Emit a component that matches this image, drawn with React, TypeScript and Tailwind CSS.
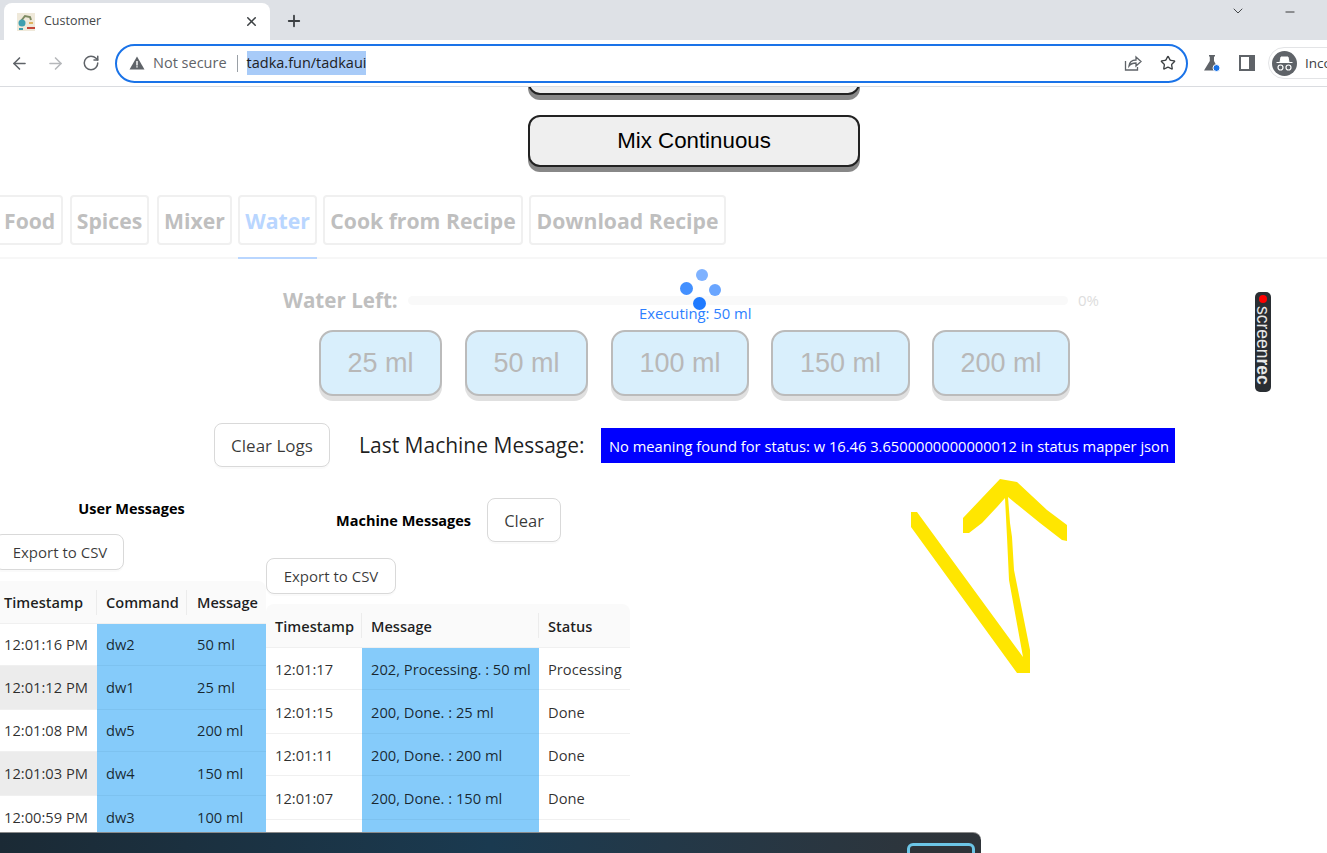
import { ArrowLeft, ArrowRight, ChevronDown, Minus, Plus, RotateCw, Star, X } from 'lucide-react';

const uiFont = "font-['Open_Sans','Noto_Sans',sans-serif]";

const tabs = [
  { label: 'Food', box: 'w-[67px] pl-[6px] text-[#bfbfbf]' },
  { label: 'Spices', box: 'w-[79px] ml-[1px] justify-center text-[#bfbfbf]' },
  { label: 'Mixer', box: 'w-[75px] ml-[2px] justify-center text-[#bfbfbf]' },
  { label: 'Water', box: 'w-[79px] justify-center text-[#b9d6ff]' },
  { label: 'Cook from Recipe', box: 'w-[200px] justify-center text-[#bfbfbf]' },
  { label: 'Download Recipe', box: 'w-[197px] justify-center text-[#bfbfbf]' },
];

const amounts = [
  { label: '25 ml', box: 'w-[123px]' },
  { label: '50 ml', box: 'w-[123px] ml-[1px]' },
  { label: '100 ml', box: 'w-[138px] ml-[1px]' },
  { label: '150 ml', box: 'w-[139px]' },
  { label: '200 ml', box: 'w-[138px]' },
];

const userRows = [
  { time: '12:01:16 PM', command: 'dw2', message: '50 ml', row: 'h-[42px]', stripe: 'bg-white' },
  { time: '12:01:12 PM', command: 'dw1', message: '25 ml', row: 'h-[44px]', stripe: 'bg-[#ececec]' },
  { time: '12:01:08 PM', command: 'dw5', message: '200 ml', row: 'h-[42px]', stripe: 'bg-white' },
  { time: '12:01:03 PM', command: 'dw4', message: '150 ml', row: 'h-[44px]', stripe: 'bg-[#ececec]' },
  { time: '12:00:59 PM', command: 'dw3', message: '100 ml', row: 'h-[44px]', stripe: 'bg-white' },
];

const machineRows = [
  { time: '12:01:17', message: '202, Processing. : 50 ml', status: 'Processing', row: 'h-[42px]' },
  { time: '12:01:15', message: '200, Done. : 25 ml', status: 'Done', row: 'h-[44px]' },
  { time: '12:01:11', message: '200, Done. : 200 ml', status: 'Done', row: 'h-[42px]' },
  { time: '12:01:07', message: '200, Done. : 150 ml', status: 'Done', row: 'h-[44px]' },
  { time: '', message: '', status: '', row: 'h-[44px]' },
];

function Favicon() {
  return (
    <svg className="shrink-0" width="18" height="18" viewBox="0 0 18 18">
      <rect width="18" height="18" fill="#efe9da" />
      <path d="M4 13V8l4-5 5 1 1 3" fill="none" stroke="#7d8a62" strokeWidth="2" />
      <circle cx="5" cy="10" r="3.500" fill="#3f9fb0" />
      <path d="M2 16h4" stroke="#3f9fb0" strokeWidth="2" />
      <path d="M10 15h8" stroke="#c4473a" strokeWidth="2" />
      <path d="M12 10h4" stroke="#d8a23a" strokeWidth="1.500" />
    </svg>
  );
}

function BrowserChrome() {
  return (
    <div className={`${uiFont} shrink-0`}>
      <div className="h-[40px] bg-[#dee1e6] flex items-end pl-[4px] relative">
        <div className="w-[266px] h-[37px] bg-white rounded-t-[8px] flex items-center pl-[13px] pr-[11px]">
          <Favicon />
          <span className="ml-[9px] text-[12.5px] text-[#45474a]">Customer</span>
          <X className="ml-auto w-[15px] h-[15px] text-[#3c4043]" strokeWidth={2.4} />
        </div>
        <Plus className="ml-[15px] mb-[10px] w-[18px] h-[18px] text-[#3c4043]" strokeWidth={2.4} />
        <ChevronDown className="ml-auto mb-[21px] mr-[37px] w-[16px] h-[16px] text-[#45474a]" strokeWidth={1.5} />
        <Minus className="mb-[21px] mr-[30px] w-[14px] h-[14px] text-[#222]" strokeWidth={1.5} />
      </div>
      <div className="h-[47px] bg-white border-b border-[#dadce0] flex items-center pl-[10px] overflow-hidden">
        <ArrowLeft className="shrink-0 w-[19px] h-[19px] text-[#5f6368]" strokeWidth={2} />
        <ArrowRight className="shrink-0 ml-[17px] w-[19px] h-[19px] text-[#b6b8bb]" strokeWidth={2} />
        <RotateCw className="shrink-0 ml-[17px] w-[18px] h-[18px] text-[#5f6368]" strokeWidth={2} />
        <div className="ml-[15px] w-[1073px] h-[39px] border-2 border-[#1a73e8] rounded-full flex items-center pl-[12px] pr-[10px] shrink-0">
          <svg className="shrink-0" width="16" height="14" viewBox="0 0 16 14">
            <path d="M8 0.500 15.500 13.500H.5Z" fill="#5f6368" />
            <path d="M7.300 5h1.400v4.400H7.300zM7.300 10.200h1.400v1.400H7.300z" fill="#fff" />
          </svg>
          <span className="ml-[8px] text-[14.5px] text-[#5f6368]">Not secure</span>
          <span className="ml-[10px] w-px h-[17px] bg-[#9aa0a6]" />
          <span className="ml-[9px] text-[14.5px] leading-[24px] text-[#202124] bg-[#a8cbf8]">tadka.fun/tadkaui</span>
          <svg className="ml-auto" width="18" height="18" viewBox="0 0 18 18" fill="none" stroke="#5f6368" strokeWidth="1.300">
            <path d="M1.500 7v9h12v-3" />
            <path d="M5 12c.5-4 3.500-6 7-6V3l5 4.500-5 4.500V9c-3 0-5.500 1-7 3Z" />
          </svg>
          <Star className="ml-[18px] w-[16px] h-[16px] text-[#3c4043]" strokeWidth={2} />
        </div>
        <svg className="ml-[15px] shrink-0" width="18" height="18" viewBox="0 0 18 18">
          <path d="M6 1h6v1.500h-1V7l5 9.500H1L6.800 7V2.500H6Z" fill="#5f6368" />
          <circle cx="13.500" cy="14" r="3.500" fill="#1a73e8" stroke="#fff" />
        </svg>
        <svg className="ml-[17px] shrink-0" width="18" height="16" viewBox="0 0 18 16">
          <path fillRule="evenodd" d="M1 0h16v16H1ZM3 2v12h8V2Z" fill="#5f6368" />
        </svg>
        <div className="ml-[12px] h-[32px] pl-[3px] w-[80px] shrink-0 border border-[#e3e4e6] rounded-l-full flex items-center">
          <svg className="shrink-0" width="25" height="25" viewBox="0 0 25 25">
            <circle cx="12.500" cy="12.500" r="12.500" fill="#5f6368" />
            <path d="M4.500 11.500h16M8 11l1-5h7l1 5Z" fill="#fff" stroke="#fff" />
            <circle cx="8.500" cy="16.500" r="2.500" fill="none" stroke="#fff" strokeWidth="1.200" />
            <circle cx="16.500" cy="16.500" r="2.500" fill="none" stroke="#fff" strokeWidth="1.200" />
          </svg>
          <span className="ml-[8px] text-[13.5px] text-[#3c4043]">Incognito</span>
        </div>
      </div>
    </div>
  );
}

function OutlineButton({ label, className }: { label: string; className: string }) {
  return (
    <button className={`${className} bg-white border border-[#d9d9d9] rounded-[8px] shadow-[0_2px_0_rgba(0,0,0,0.02)] text-[rgba(0,0,0,0.78)] shrink-0`}>
      {label}
    </button>
  );
}

function HeaderCell({ label, pad, last }: { label: string; pad: string; last?: boolean }) {
  return (
    <div className="flex items-center h-full">
      <span className={`${pad} pt-[2px] font-semibold text-[14.6px] text-[rgba(0,0,0,0.88)]`}>{label}</span>
      {!last && <span className="ml-auto w-px h-[25px] bg-[#ececec]" />}
    </div>
  );
}

function UserTable() {
  return (
    <div className="mt-[11px] w-[266px] text-[14.7px] text-[rgba(0,0,0,0.82)]">
      <div className="h-[43px] bg-[#fafafa] rounded-tr-[8px] grid grid-cols-[97px_90px_79px] border-b border-[#f0f0f0]">
        <HeaderCell label="Timestamp" pad="pl-[4px]" />
        <HeaderCell label="Command" pad="pl-[9px]" />
        <HeaderCell label="Message" pad="pl-[10px]" last />
      </div>
      {userRows.map((r) => (
        <div key={r.time} className={`${r.row} grid grid-cols-[97px_169px]`}>
          <div className={`${r.stripe} flex items-center pl-[4px] whitespace-nowrap border-b border-[#f0f0f0]`}>{r.time}</div>
          <div className="bg-[#85cbfa] grid grid-cols-[90px_79px] items-center border-b border-[#7dc2f0]">
            <span className="pl-[9px]">{r.command}</span>
            <span className="pl-[10px]">{r.message}</span>
          </div>
        </div>
      ))}
    </div>
  );
}

function MachineTable() {
  return (
    <div className="mt-[10px] w-[364px] text-[14.7px] text-[rgba(0,0,0,0.82)]">
      <div className="h-[44px] bg-[#fafafa] rounded-t-[8px] grid grid-cols-[96px_177px_91px] border-b border-[#f0f0f0]">
        <HeaderCell label="Timestamp" pad="pl-[9px]" />
        <HeaderCell label="Message" pad="pl-[9px]" />
        <HeaderCell label="Status" pad="pl-[9px]" last />
      </div>
      {machineRows.map((r, i) => (
        <div key={i} className={`${r.row} grid grid-cols-[96px_177px_91px] items-stretch`}>
          <div className="flex items-center pl-[9px] pt-[2px] border-b border-[#f0f0f0]">{r.time}</div>
          <div className="bg-[#85cbfa] flex items-center pl-[9px] pt-[2px] whitespace-nowrap border-b border-[#7dc2f0]">{r.message}</div>
          <div className="flex items-center pl-[9px] pt-[2px] border-b border-[#f0f0f0]">{r.status}</div>
        </div>
      ))}
    </div>
  );
}

function ScreenRecBadge() {
  return (
    <div className="absolute left-[1255px] top-[205px] w-[16px] h-[100px] bg-[#2a2e33] rounded-[5px] flex flex-col items-center">
      <span className="mt-[3px] w-[8px] h-[8px] rounded-full bg-[#ff0000] shrink-0" />
      <span className="mt-[3px] font-['Liberation_Sans',sans-serif] text-[17.5px] leading-[16px] text-[#e8e8e8] [writing-mode:vertical-rl] whitespace-nowrap">
        screen<b>rec</b>
      </span>
    </div>
  );
}

function Spinner() {
  return (
    <div className="absolute left-[680px] top-[182px] w-[42px] h-[42px]">
      <span className="absolute left-[16px] top-0 w-[12px] h-[12px] rounded-full bg-[#7fb2ff]" />
      <span className="absolute left-0 top-[13px] w-[13px] h-[13px] rounded-full bg-[#4390ff]" />
      <span className="absolute left-[29px] top-[15px] w-[12px] h-[12px] rounded-full bg-[#69a5ff]" />
      <span className="absolute left-[13px] top-[28px] w-[13px] h-[13px] rounded-full bg-[#1f7aff]" />
    </div>
  );
}

function Arrow() {
  return (
    <svg className="absolute left-0 top-0" width="1327" height="766" viewBox="0 87 1327 766">
      <polygon
        fill="#ffe600"
        points="911,512 917,512 1023,657 1009,580 1007,537 1005,498 997,507 982,523 969,533 963,533 963,518 1000,479 1017,482 1047,510 1067,525 1067,541 1062,540 1040,523 1008,497 1010,523 1012,537 1014,570 1030,650 1030,673 1017,673 911,527"
      />
    </svg>
  );
}

export default function App() {
  return (
    <div className="w-[1327px] h-[853px] overflow-hidden flex flex-col bg-white">
      <BrowserChrome />
      <div className={`${uiFont} relative flex-1 overflow-hidden`}>
        <button className="block -mt-[44px] ml-[528px] w-[332px] h-[52px] bg-[#efefef] border-2 border-[#222] rounded-[12px] shadow-[0_5px_0_#888]" />
        <button className="block mt-[20px] ml-[528px] w-[332px] h-[52px] bg-[#efefef] border-2 border-[#222] rounded-[12px] shadow-[0_5px_0_#888] font-['Liberation_Sans',sans-serif] text-[22.3px] text-black">
          Mix Continuous
        </button>

        <div className="mt-[28px] -ml-[4px] flex gap-[6px]">
          {tabs.map((t) => (
            <div key={t.label} className={`${t.box} h-[50px] pt-[2px] flex items-center shrink-0 border-2 border-[#f0f0f0] rounded-[4px] font-bold text-[21.2px] whitespace-nowrap`}>
              {t.label}
            </div>
          ))}
        </div>
        <div className="mt-[12px] h-[2px] bg-[#f7f7f7] flex">
          <span className="ml-[238px] w-[79px] h-[2px] bg-[#b9d6ff]" />
        </div>

        <div className="mt-[27px] ml-[283px] flex items-center h-[28px]">
          <span className="w-[125px] font-bold text-[20.6px] text-[#bfbfbf] whitespace-nowrap">Water Left:</span>
          <span className="w-[660px] h-[9px] rounded-full bg-[#f9f9f9]" />
          <span className="ml-[10px] text-[15px] text-[#dddddd]">0%</span>
        </div>
        <div className="-mt-[9px] ml-[639px] h-[16px] flex items-center text-[14.8px] text-[#2d7fff] whitespace-nowrap">Executing: 50 ml</div>

        <div className="mt-[9px] ml-[319px] flex gap-[22px]">
          {amounts.map((a) => (
            <div key={a.label} className={`${a.box} h-[66px] flex items-center justify-center bg-[#d9effc] border-2 border-[#bbbbbb] rounded-[14px] shadow-[0_5px_0_#e0e0e0] font-['Liberation_Sans',sans-serif] text-[27px] text-[#b8b8b8]`}>
              {a.label}
            </div>
          ))}
        </div>

        <div className="mt-[27px] ml-[214px] flex items-center h-[44px]">
          <OutlineButton label="Clear Logs" className="w-[116px] h-[44px] pt-[2px] text-[17px]" />
          <span className="ml-[29px] pt-[2px] w-[242px] text-[21px] text-[rgba(0,0,0,0.88)] whitespace-nowrap">Last Machine Message:</span>
          <div className="w-[574px] h-[35px] bg-[#0000ff] flex items-center pl-[8px] pt-[2px] text-[14.7px] text-white whitespace-nowrap">
            No meaning found for status: w 16.46 3.6500000000000012 in status mapper json
          </div>
        </div>

        <div className="flex items-start">
          <div className="w-[266px] shrink-0 pt-[32px]">
            <div className="h-[20px] pr-[3px] flex items-center justify-center font-bold text-[14.5px] text-black">User Messages</div>
            <OutlineButton label="Export to CSV" className="block mt-[15px] -ml-[6px] w-[130px] h-[36px] pl-[2px] text-[15px]" />
            <UserTable />
          </div>
          <div className="shrink-0 pt-[31px]">
            <div className="flex items-center ml-[70px] h-[44px]">
              <span className="pt-[2px] font-bold text-[14.5px] text-black whitespace-nowrap">Machine Messages</span>
              <OutlineButton label="Clear" className="ml-[16px] w-[74px] h-[44px] pt-[2px] text-[16.5px]" />
            </div>
            <OutlineButton label="Export to CSV" className="block mt-[16px] w-[130px] h-[36px] text-[15px]" />
            <MachineTable />
          </div>
        </div>

        <Spinner />
        <ScreenRecBadge />
        <Arrow />

        <div className="absolute left-0 bottom-0 w-[981px] h-[21px] rounded-tr-[8px] border-t border-[#8a8a8a] bg-gradient-to-r from-[#1b2a35] via-[#1a3a50] to-[#2f3439] overflow-hidden">
          <div className="absolute left-[907px] top-[10px] w-[68px] h-[14px] border-[3px] border-[#6cc5e6] rounded-t-[6px] bg-[#2e3338]" />
        </div>
      </div>
    </div>
  );
}
